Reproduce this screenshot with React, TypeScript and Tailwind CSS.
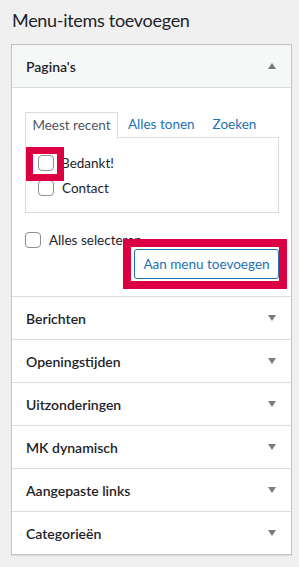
import React from 'react';

const font = { fontFamily: 'Lato, "Noto Sans", sans-serif' };

function Arrow({ up = false }: { up?: boolean }) {
	return (
		<svg width="8" height="6" viewBox="0 0 8 6" className="text-[#787c82]">
			{up ? <path d="M4 0 L8 6 L0 6 Z" fill="currentColor" /> : <path d="M0 0 L8 0 L4 6 Z" fill="currentColor" />}
		</svg>
	);
}

function Box() {
	return <span className="block w-4 h-4 rounded-[4px] border border-[#8c8f94] bg-white" />;
}

const sections = ['Berichten', 'Openingstijden', 'Uitzonderingen', 'MK dynamisch', 'Aangepaste links', 'Categorieën'];

export default function App() {
	return (
		<div className="w-[299px] h-[567px] bg-[#f0f0f1] text-[#1d2327]" style={font}>
			<h2 className="pl-3 pt-[5px] h-[44px] text-[18px] tracking-[-0.3px] leading-[30px]">Menu-items toevoegen</h2>
			<div className="ml-[11px] w-[281px] border border-[#c3c4c7] bg-white shadow-[0_1px_1px_rgba(0,0,0,0.08)]">
				<div className="h-[43px] flex items-center justify-between pl-[14px] pr-[15px] bg-[#f6f7f7] border-b border-[#dcdcde]">
					<span className="text-[14px] font-semibold">Pagina's</span>
					<Arrow up />
				</div>
				<div className="relative pt-[24px] pl-[13px] pr-[12px] pb-[17px] text-[13.5px]">
					<div className="flex items-end">
						<div className="h-[26px] w-[93px] border border-b-0 border-[#dcdcde] bg-white flex items-center justify-center relative z-10 -mb-px text-[#50575e]">
							Meest recent
						</div>
						<a className="ml-[10px] h-[25px] flex items-center text-[#2271b1]">Alles tonen</a>
						<a className="ml-[18px] h-[25px] flex items-center text-[#2271b1]">Zoeken</a>
					</div>
					<div className="h-[76px] border border-[#dcdcde] pt-[17px] pl-[12px]">
						<label className="flex items-center gap-[7px] h-[16px]">
							<Box />
							<span>Bedankt!</span>
						</label>
						<label className="flex items-center gap-[8px] h-[16px] mt-[9px]">
							<Box />
							<span>Contact</span>
						</label>
					</div>
					<label className="flex items-center gap-[8px] h-[16px] mt-[19px]">
						<Box />
						<span>Alles selecteren</span>
					</label>
					<div className="flex justify-end mt-px">
						<button className="h-[30px] w-[145px] border border-[#2271b1] rounded-[3px] bg-white text-[#2271b1]">
							Aan menu toevoegen
						</button>
					</div>
					<div className="absolute left-[14px] top-[59px] w-[38px] h-[34px] border-[7px] border-[#dc0042]" />
					<div className="absolute left-[111px] top-[151px] w-[164px] h-[50px] border-[8px] border-[#dc0042]" />
				</div>
				{sections.map((s) => (
					<div key={s} className="h-[43px] flex items-center justify-between pl-[14px] pr-[15px] border-t border-[#dcdcde]">
						<span className="text-[14px] font-semibold">{s}</span>
						<Arrow />
					</div>
				))}
			</div>
		</div>
	);
}
